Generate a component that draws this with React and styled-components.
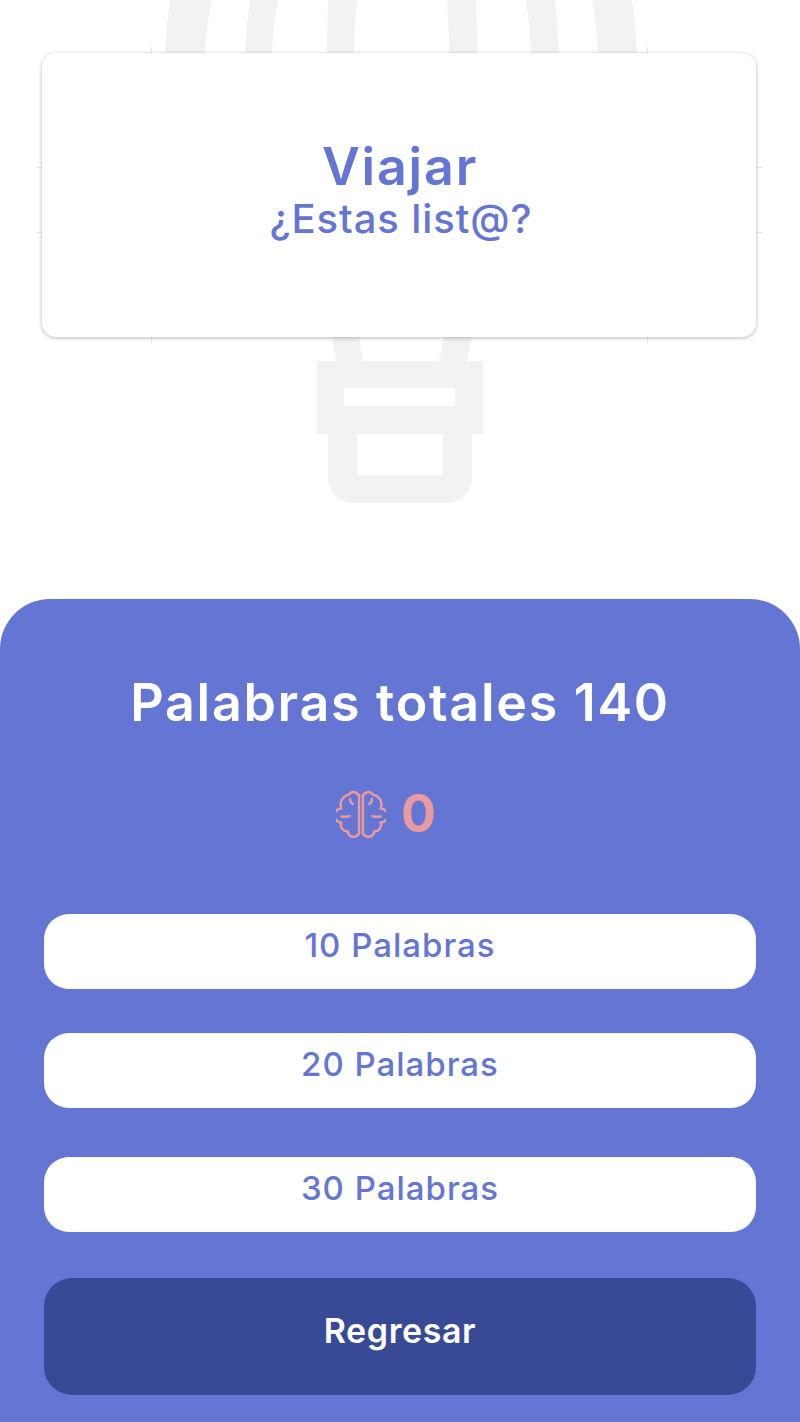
import React from "react";
import styled, { createGlobalStyle } from "styled-components";

const Global = createGlobalStyle`
  html, body { margin: 0; padding: 0; background: #fff; }
  * { box-sizing: border-box; }
`;

const Page = styled.div`
  position: relative;
  width: 800px;
  height: 1422px;
  overflow: hidden;
  background: #fff;
  font-family: Inter, "Open Sans", sans-serif;
  display: flex;
  flex-direction: column;
`;

const Backdrop = styled.svg`
  position: absolute;
  top: 0;
  left: 0;
  width: 800px;
  height: 520px;
`;

const Card = styled.section`
  position: relative;
  margin: 53px 44px 0 42px;
  height: 284px;
  background: #fff;
  border-radius: 14px;
  box-shadow: 0 1px 4px rgba(0, 0, 0, 0.28);
  display: flex;
  flex-direction: column;
  align-items: center;
  padding-top: 84px;
  color: #6475d3;
`;

const Word = styled.h1`
  margin: 0 0 0 2px;
  font-size: 52px;
  line-height: 60px;
  font-weight: 600;
  letter-spacing: 1.8px;
`;

const Prompt = styled.p`
  margin: 0 0 0 4px;
  font-size: 40px;
  line-height: 44px;
  font-weight: 500;
  letter-spacing: 0.9px;
`;

const Panel = styled.section`
  position: relative;
  margin-top: 262px;
  flex: 1;
  background: #6475d3;
  border-radius: 50px 50px 0 0;
  padding: 72px 44px 0;
  display: flex;
  flex-direction: column;
  align-items: stretch;
`;

const Title = styled.h2`
  margin: 0;
  text-align: center;
  color: #fff;
  font-size: 52px;
  line-height: 64px;
  font-weight: 600;
  letter-spacing: 1.7px;
`;

const Score = styled.div`
  margin-top: 52px;
  padding-right: 28px;
  display: flex;
  align-items: center;
  justify-content: center;
  gap: 15px;
  height: 52px;
  color: #e89a9f;
  font-size: 52px;
  font-weight: 700;
`;

const Options = styled.div`
  margin-top: 75px;
  display: flex;
  flex-direction: column;
`;

const Option = styled.button`
  height: 75px;
  margin-bottom: ${(p) => p.$gap}px;
  border: 0;
  border-radius: 25px;
  background: #fff;
  color: #6475d3;
  font: 500 33px/62px Inter, "Open Sans", sans-serif;
  letter-spacing: 1px;
  padding: 0 0 ${(p) => p.$lift}px;
  text-align: center;
`;

const Back = styled.button`
  margin-top: 46px;
  height: 117px;
  border: 0;
  border-radius: 28px;
  background: #384995;
  color: #fff;
  font: 600 34px/40px Inter, "Open Sans", sans-serif;
  letter-spacing: 0.6px;
  padding: 0 0 12px;
  text-align: center;
`;

const Brain = () => {
  const half = "M178 68A18 18 0 0 0 146 64A32 32 0 0 0 122 108A20.600 20.600 0 0 0 122 152A20.600 20.600 0 0 0 142 180A18.900 18.900 0 0 0 178 186";
  const marks = "M178 66V186M158 93C151 90 149 84 150 78M122 133C130 135 140 134 148 132";
  return (
    <svg width="50" height="50" viewBox="105 43 158 158" fill="none" stroke="#e89a9f" strokeWidth="8" strokeLinecap="round" strokeLinejoin="round">
      <path d={half} />
      <path d={marks} />
      <g transform="matrix(-1 0 0 1 368 0)">
        <path d={half} />
        <path d={marks} />
      </g>
    </svg>
  );
};

export default function App() {
  return (
    <Page>
      <Global />
      <Backdrop viewBox="0 0 800 520">
        <g fill="#f2f2f2">
          <path d="M170 0H212Q206 26 205 53H165Q166 26 170 0Z" />
          <path d="M250 0H278Q273 26 272 53H245Q246 26 250 0Z" />
          <path d="M328 0H357Q354 26 354 53H327Q327 26 328 0Z" />
          <path d="M447 0H476Q477 26 477 53H449Q449 26 447 0Z" />
          <path d="M526 0H555Q558 26 559 53H531Q530 26 526 0Z" />
          <path d="M592 0H632Q636 26 637 53H598Q597 26 592 0Z" />
          <path d="M332 337H359L363 361H336Z" />
          <path d="M444 337H472L467 361H439Z" />
          <path fillRule="evenodd" d="M317 361H483V434H472V477C472 491 460 503 446 503H354C340 503 328 491 328 477V434H317ZM344 388V406H455V388ZM357 434V475H443V434Z" />
        </g>
        <g stroke="#e8e8e8" strokeWidth="1">
          <path d="M151.500 47V53M647.500 47V53M151.500 337V343M647.500 337V343" />
          <path d="M36 167.500H42M36 232.500H42M756 167.500H762M756 232.500H762" />
        </g>
      </Backdrop>
      <Card>
        <Word>Viajar</Word>
        <Prompt>¿Estas list@?</Prompt>
      </Card>
      <Panel>
        <Title>Palabras totales 140</Title>
        <Score>
          <Brain />
          <span>0</span>
        </Score>
        <Options>
          <Option $gap={44} $lift={14}>10 Palabras</Option>
          <Option $gap={49} $lift={14}>20 Palabras</Option>
          <Option $gap={0} $lift={16}>30 Palabras</Option>
        </Options>
        <Back>Regresar</Back>
      </Panel>
    </Page>
  );
}
